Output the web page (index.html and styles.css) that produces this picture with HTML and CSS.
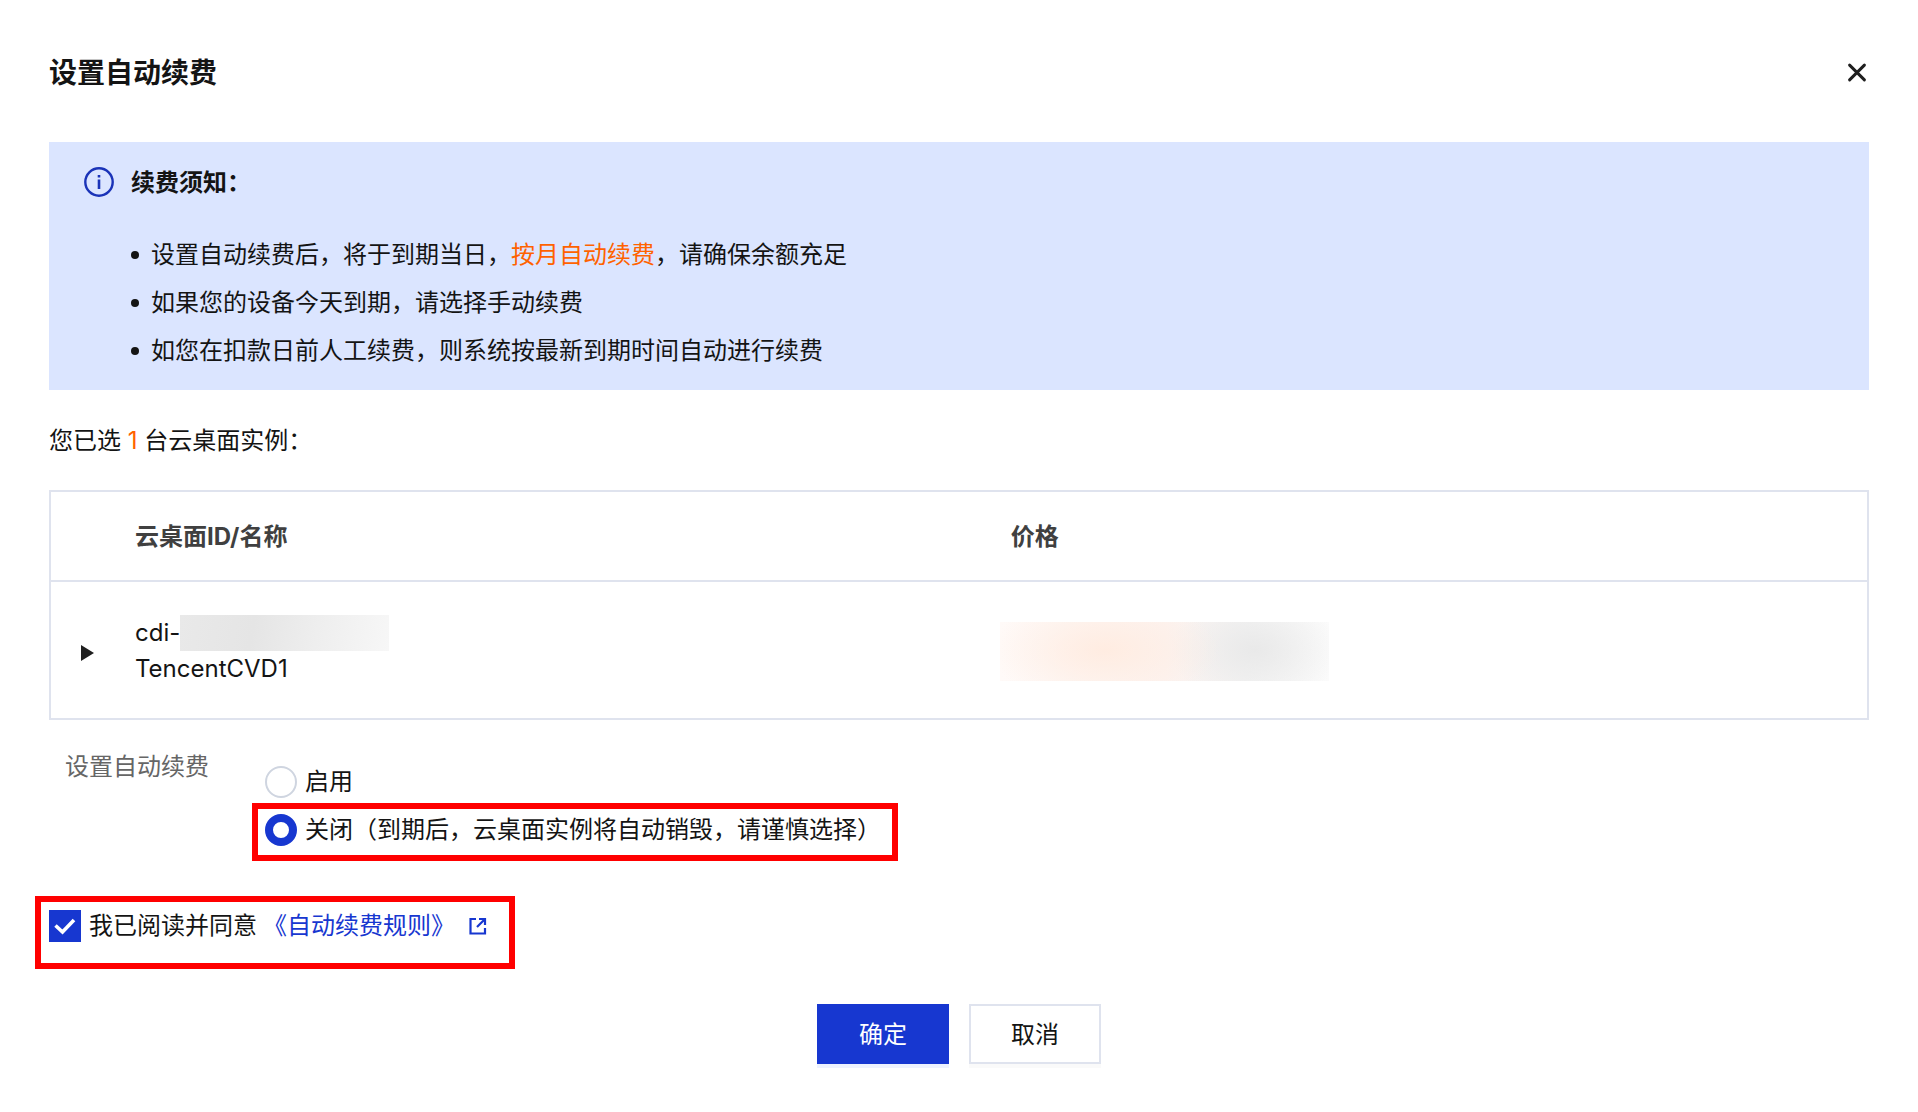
FILE: index.html
```html
<!DOCTYPE html>
<html lang="zh-CN">

<head>
  <meta charset="UTF-8" />
  <meta name="viewport" content="width=device-width, initial-scale=1.0" />
  <title>设置自动续费</title>
  <link rel="stylesheet" href="styles.css">
</head>

<body>
  <form class="dialog">
    <header class="dialog-header">
      <h1>设置自动续费</h1>
      <button type="button" class="close" aria-label="关闭">
        <svg width="24" height="24" viewBox="0 0 24 24" fill="none" stroke="#1f1f1f" stroke-width="3" stroke-linecap="round">
          <path d="M4.6 4.1l14.8 14.8M19.4 4.1L4.6 18.900" />
        </svg>
      </button>
    </header>

    <section class="notice">
      <svg class="notice-icon" width="30" height="30" viewBox="0 0 30 30">
        <circle cx="15" cy="15" r="13.7" fill="none" stroke="#1a33b8" stroke-width="2.4" />
        <path d="M13.7 12.5h2.6v9.5h-2.6zM13.7 8h2.6v2.4h-2.6z" fill="#1a33b8" />
      </svg>
      <div>
        <h2>续费须知：</h2>
        <ul>
          <li>设置自动续费后，将于到期当日，<span class="orange">按月自动续费</span>，请确保余额充足</li>
          <li>如果您的设备今天到期，请选择手动续费</li>
          <li>如您在扣款日前人工续费，则系统按最新到期时间自动进行续费</li>
        </ul>
      </div>
    </section>

    <p class="selected">您已选 <span class="orange">1</span> 台云桌面实例：</p>

    <table class="list">
      <thead>
        <tr>
          <th class="col-toggle"></th>
          <th>云桌面ID/名称</th>
          <th class="col-price">价格</th>
        </tr>
      </thead>
      <tbody>
        <tr>
          <td class="col-toggle">
            <button type="button" class="toggle" aria-label="展开">
              <svg width="13" height="16" viewBox="0 0 13 16"><path d="M0 0l13 8-13 8z" fill="#1f1f1f" /></svg>
            </button>
          </td>
          <td>
            <div class="instance-id">cdi-<span class="mask-id"></span></div>
            <div>TencentCVD1</div>
          </td>
          <td class="col-price"><div class="mask-price"></div></td>
        </tr>
      </tbody>
    </table>

    <div class="setting" role="radiogroup" aria-labelledby="renewLabel">
      <span class="setting-label" id="renewLabel">设置自动续费</span>
      <div class="options">
        <label class="option"><input type="radio" name="renew" value="on">启用</label>
        <label class="option marked marked-option"><input type="radio" name="renew" value="off" checked>关闭（到期后，云桌面实例将自动销毁，请谨慎选择）</label>
      </div>
    </div>

    <div class="agree marked marked-agree">
      <input type="checkbox" id="agree" checked>
      <label for="agree">我已阅读并同意</label>
      <a href="#">《自动续费规则》
        <svg width="20" height="20" viewBox="0 0 20 20" fill="none" stroke="#1737d0" stroke-width="2.2">
          <path d="M8 3H2.5v14.5H17V12M11 3h6v6M17 3l-8 8" />
        </svg>
      </a>
    </div>

    <footer class="actions">
      <button type="submit" class="btn btn-primary">确定</button>
      <button type="button" class="btn">取消</button>
    </footer>
  </form>
</body>

</html>
```
FILE: styles.css
```css
* {
  box-sizing: border-box;
}

body {
  margin: 0;
  background-color: #fff;
  color: #141414;
  font-family: Inter, "Noto Sans CJK SC", sans-serif;
  font-size: 24px;
  line-height: 36px;
}

h1,
h2,
p,
ul {
  margin: 0;
  padding: 0;
}

button,
input {
  margin: 0;
  font: inherit;
}

.dialog {
  padding: 53px 49px;
}

.dialog-header {
  display: flex;
  justify-content: space-between;
  align-items: center;
  height: 40px;
  margin-bottom: 49px;
}

h1 {
  font-size: 28px;
  font-weight: 700;
}

.close,
.toggle {
  display: flex;
  padding: 0;
  border: none;
  background: none;
}

.orange {
  color: #ff6200;
}

.notice {
  display: flex;
  gap: 17px;
  padding: 23px 35px 15px;
  background-color: #dbe5ff;
}

.notice-icon {
  flex-shrink: 0;
  margin-top: 2px;
}

h2 {
  margin-bottom: 30px;
  font-size: 24px;
  font-weight: 700;
}

.notice ul {
  list-style: none;
}

.notice li {
  display: flex;
  align-items: center;
  line-height: 48px;
}

.notice li::before {
  content: "";
  width: 8px;
  height: 8px;
  margin-right: 12px;
  border-radius: 50%;
  background-color: #141414;
}

.selected {
  margin: 33px 0 31px;
}

.list {
  width: 100%;
  border: 2px solid #dfe3ee;
  border-collapse: separate;
  border-spacing: 0;
  table-layout: fixed;
}

.list th {
  height: 90px;
  padding: 2px 0 0;
  border-bottom: 2px solid #dfe3ee;
  color: #404040;
  text-align: left;
  font-weight: 700;
}

.list td {
  padding: 33px 0 31px;
}

.list .col-toggle {
  width: 84px;
  padding-left: 30px;
}

.list .col-price {
  width: 47.15%;
}

.toggle {
  margin-top: 4px;
}

.instance-id {
  display: flex;
}

.mask-id {
  width: 209px;
  background: linear-gradient(100deg, #e9e9e9, #e5e5e5 35%, #eeeeee 65%, #f7f7f7);
}

.mask-price {
  width: 329px;
  height: 59px;
  margin-left: -11px;
  background:
    radial-gradient(ellipse 115px 55px at 105px 28px, #ffece1, rgba(255, 236, 225, 0)),
    radial-gradient(ellipse 85px 55px at 255px 28px, #e9e9e9, rgba(233, 233, 233, 0)),
    linear-gradient(90deg, #fffaf8, #fcf3f0 50%, #f4f4f4 75%, #fbfbfb);
}

.setting {
  display: flex;
  gap: 56px;
  padding: 29px 16px 0;
}

.setting-label {
  flex-shrink: 0;
  color: #666;
}

.options {
  padding-top: 9px;
}

.option {
  display: flex;
  align-items: center;
  gap: 8px;
  height: 48px;
}

input[type="radio"],
input[type="checkbox"] {
  appearance: none;
  flex-shrink: 0;
  width: 32px;
  height: 32px;
}

input[type="radio"] {
  border: 2px solid #cfd5e0;
  border-radius: 50%;
}

input[type="radio"]:checked {
  border: 8px solid #1737d0;
}

input[type="checkbox"] {
  background: #1737d0 url("data:image/svg+xml,%3Csvg xmlns='http://www.w3.org/2000/svg' viewBox='0 0 32 32'%3E%3Cpath d='M6.5 15.5l7 6.5 11.5-12' fill='none' stroke='white' stroke-width='3.6'/%3E%3C/svg%3E");
}

/* red callout frames */
.marked {
  position: relative;
  width: fit-content;
}

.marked::after {
  content: "";
  position: absolute;
  border: 6px solid #ff0000;
  pointer-events: none;
}

.marked-option::after {
  inset: -3px -17px -7px -13px;
}

.marked-agree::after {
  inset: -12px -27px -25px -14px;
}

.agree {
  display: flex;
  align-items: center;
  gap: 8px;
  height: 36px;
  margin-top: 54px;
}

.agree a {
  display: flex;
  align-items: center;
  gap: 13px;
  margin-left: -2px;
  color: #1737d0;
  text-decoration: none;
}

.actions {
  display: flex;
  justify-content: center;
  gap: 20px;
  margin-top: 60px;
}

.btn {
  width: 132px;
  height: 60px;
  padding: 2px 0 0;
  border: 2px solid #dfe3ee;
  background-color: #fff;
  box-shadow: 0 4px 0 #fafafa;
  color: #141414;
}

.btn-primary {
  border-color: #1737d0;
  background-color: #1737d0;
  box-shadow: 0 4px 0 #edf2ff;
  color: #fff;
}
```
